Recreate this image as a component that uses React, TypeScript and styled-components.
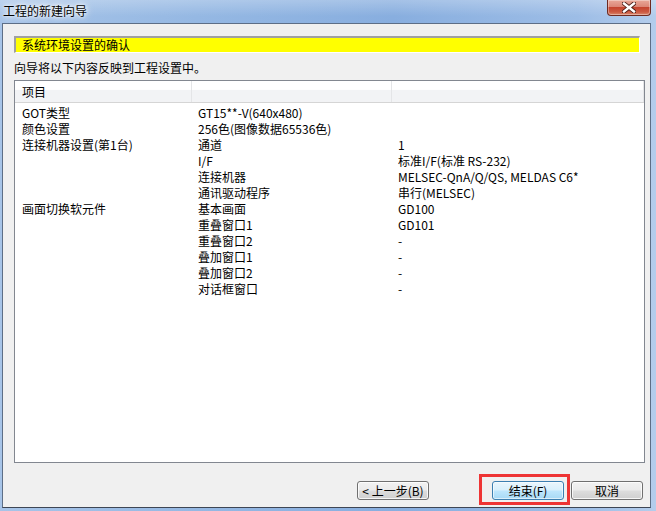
import React from "react";
import styled, { createGlobalStyle } from "styled-components";

const Global = createGlobalStyle`
  html, body { margin: 0; padding: 0; overflow: hidden; }
  body { font-family: "Noto Sans CJK SC", "Liberation Sans", sans-serif; font-size: 12px; color: #000; }
`;

const Win = styled.div`
  width: 656px;
  height: 511px;
  display: flex;
  flex-direction: column;
  box-sizing: border-box;
  background: linear-gradient(to right, #a7c4e8 0%, #95b8e3 30%, #88aedf 60%, #9dbde6 88%, #b4cdec 100%);
`;

const TitleBar = styled.div`
  height: 23px;
  flex: 0 0 23px;
  display: flex;
  align-items: flex-start;
  padding-left: 3px;
  background: linear-gradient(to bottom, rgba(255,255,255,0.25), rgba(255,255,255,0) 70%);
`;

const Title = styled.div`
  margin-top: 4px;
  font-size: 12px;
  line-height: 14px;
  letter-spacing: 0;
  color: #000;
  text-shadow: 0 0 6px #fff, 0 0 10px rgba(255,255,255,0.9), 0 0 3px #fff;
`;

const CloseBtn = styled.div`
  margin-left: auto;
  margin-right: 5px;
  width: 44px;
  height: 16px;
  box-sizing: border-box;
  border: 1px solid #6e2a20;
  border-top: none;
  border-radius: 0 0 4px 4px;
  background: linear-gradient(to bottom, #e9a899 0%, #dc8676 45%, #c5442f 50%, #cc5a42 80%, #d98a70 100%);
  box-shadow: inset 0 0 0 1px rgba(255,255,255,0.35);
  display: flex;
  align-items: center;
  justify-content: center;
`;

const Client = styled.div`
  flex: 1;
  margin: 0 5px 3px 2px;
  border: 1px solid #5d6e86;
  border-bottom-color: #3e4654;
  background: #f0f0f0;
  display: flex;
  flex-direction: column;
  padding: 12px 5px 0 11px;
  box-sizing: border-box;
  min-height: 0;
`;

const StepBar = styled.div`
  height: 17px;
  width: 626px;
  box-sizing: border-box;
  background: #ffff00;
  border-top: 2px solid #a0a0a0;
  border-left: 2px solid #a0a0a0;
  border-right: 1px solid #fff;
  border-bottom: 1px solid #fff;
  padding-left: 6px;
  font-size: 12px;
  line-height: 14px;
`;

const Desc = styled.div`
  margin-top: 7px;
  line-height: 16px;
  font-size: 12px;
`;

const List = styled.div`
  margin-top: 4px;
  width: 631px;
  height: 383px;
  box-sizing: border-box;
  border: 1px solid #828790;
  background: #fff;
  display: flex;
  flex-direction: column;
`;

const Header = styled.div`
  display: grid;
  grid-template-columns: 177px 200px 1fr;
  height: 22px;
  box-sizing: border-box;
  background: linear-gradient(to bottom, #ffffff 0%, #ffffff 40%, #f2f3f5 45%, #f2f3f5 100%);
  border-bottom: 1px solid #d5d5d5;
`;

const HeadCell = styled.div`
  padding-left: 7px;
  line-height: 21px;
  border-right: 1px solid #e4e5e7;
`;

const Body = styled.div`
  padding-top: 2px;
  display: flex;
  flex-direction: column;
`;

const Row = styled.div`
  display: grid;
  grid-template-columns: 177px 200px 1fr;
  height: 16px;
  line-height: 16px;
`;

const Cell = styled.div<{ $pad: number }>`
  padding-left: ${(p) => p.$pad}px;
  white-space: nowrap;
`;

const Buttons = styled.div`
  display: flex;
  align-items: center;
  margin-top: 18px;
  padding-left: 343px;
`;

const Btn = styled.div<{ $def?: boolean }>`
  width: 72px;
  height: 19px;
  box-sizing: border-box;
  border: 1px solid ${(p) => (p.$def ? "#3c7fb1" : "#707070")};
  border-radius: 3px;
  background: ${(p) =>
    p.$def
      ? "linear-gradient(to bottom, #eaf6fd 0%, #d9f0fc 48%, #bee6fd 52%, #a7d9f5 100%)"
      : "linear-gradient(to bottom, #f2f2f2 0%, #ebebeb 48%, #dddddd 52%, #cfcfcf 100%)"};
  box-shadow: inset 0 0 0 1px ${(p) => (p.$def ? "rgba(255,255,255,0.6)" : "rgba(255,255,255,0.8)")};
  display: flex;
  align-items: center;
  justify-content: center;
  font-size: 12px;
  line-height: 14px;
`;

const Highlight = styled.div`
  position: relative;
  margin-left: 63px;
  margin-right: 7px;
  &::after {
    content: "";
    position: absolute;
    left: -13px;
    right: -6px;
    top: -7px;
    bottom: -5px;
    border: 3px solid #ee3434;
    pointer-events: none;
  }
`;

const rows: [string, string, string][] = [
  ["GOT类型", "GT15**-V(640x480)", ""],
  ["颜色设置", "256色(图像数据65536色)", ""],
  ["连接机器设置(第1台)", "通道", "1"],
  ["", "I/F", "标准I/F(标准 RS-232)"],
  ["", "连接机器", "MELSEC-QnA/Q/QS, MELDAS C6*"],
  ["", "通讯驱动程序", "串行(MELSEC)"],
  ["画面切换软元件", "基本画面", "GD100"],
  ["", "重叠窗口1", "GD101"],
  ["", "重叠窗口2", "-"],
  ["", "叠加窗口1", "-"],
  ["", "叠加窗口2", "-"],
  ["", "对话框窗口", "-"],
];

export default function App() {
  return (
    <>
      <Global />
      <Win>
        <TitleBar>
          <Title>工程的新建向导</Title>
          <CloseBtn>
            <svg width="14" height="11" viewBox="0 0 14 11">
              <path d="M2 1.5 L12 9.5 M12 1.5 L2 9.5" stroke="#4a1c16" strokeWidth="4.2" strokeLinecap="square" />
              <path d="M2 1.5 L12 9.5 M12 1.5 L2 9.5" stroke="#ffffff" strokeWidth="2.4" strokeLinecap="square" />
            </svg>
          </CloseBtn>
        </TitleBar>
        <Client>
          <StepBar>系统环境设置的确认</StepBar>
          <Desc>向导将以下内容反映到工程设置中。</Desc>
          <List>
            <Header>
              <HeadCell>项目</HeadCell>
              <HeadCell />
              <HeadCell />
            </Header>
            <Body>
              {rows.map((r, i) => (
                <Row key={i}>
                  <Cell $pad={7}>{r[0]}</Cell>
                  <Cell $pad={6}>{r[1]}</Cell>
                  <Cell $pad={6}>{r[2]}</Cell>
                </Row>
              ))}
            </Body>
          </List>
          <Buttons>
            <Btn>&lt; 上一步(B)</Btn>
            <Highlight>
              <Btn $def>结束(F)</Btn>
            </Highlight>
            <Btn>取消</Btn>
          </Buttons>
        </Client>
      </Win>
    </>
  );
}
